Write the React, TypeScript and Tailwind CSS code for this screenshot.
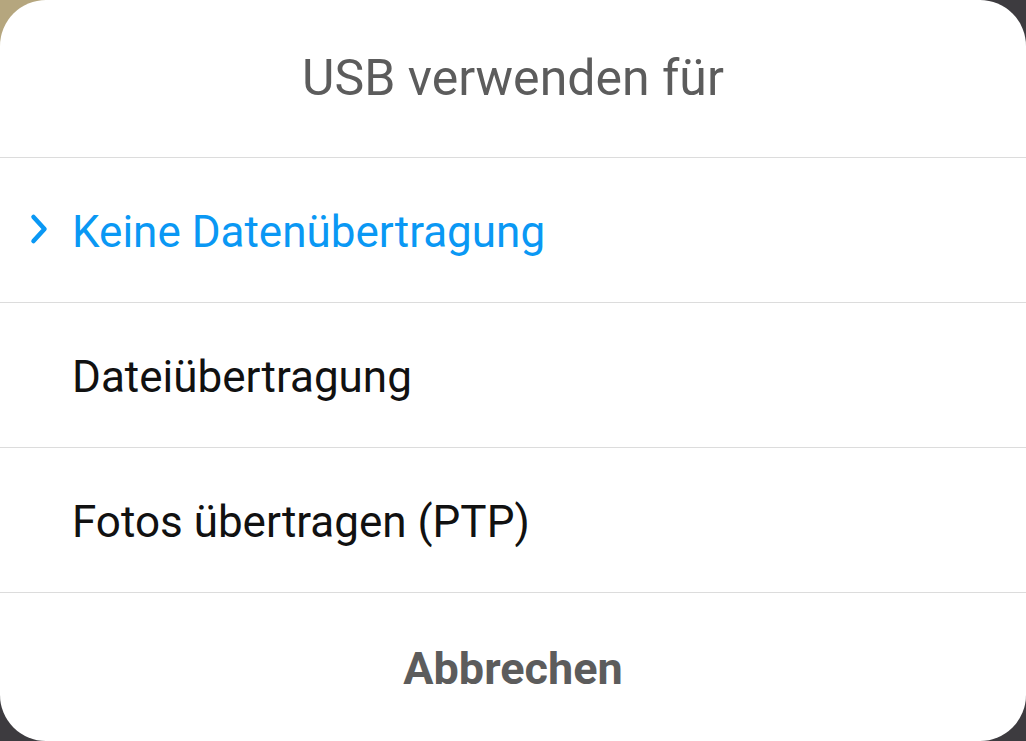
import React from 'react'

const options = [
  { label: 'Keine Datenübertragung', active: true },
  { label: 'Dateiübertragung', active: false },
  { label: 'Fotos übertragen (PTP)', active: false },
]

export default function App() {
  return (
    <div className="w-[1026px] h-[741px] overflow-hidden bg-[radial-gradient(circle_at_top_left,#b5a67e_70px,#3d3b3f_71px)] font-['Roboto',sans-serif]">
      <div className="flex h-full flex-col rounded-[46px] bg-white">
        <div className="flex h-[158px] items-center justify-center border-b border-[#dcdcdc]">
          <h1 className="text-[50px] font-normal text-[#5c5c5c]">USB verwenden für</h1>
        </div>

        {options.map((opt) => (
          <div
            key={opt.label}
            className="relative flex h-[145px] items-center border-b border-[#dcdcdc] pl-[72px] pt-1"
          >
            {opt.active && (
              <svg
                className="absolute left-[29px] top-[55px]"
                width="20"
                height="32"
                viewBox="0 0 20 32"
                fill="none"
              >
                <path
                  d="M4.5 4 L15.5 16 L4.5 28"
                  stroke="#0a98f4"
                  strokeWidth="4.5"
                  strokeLinecap="round"
                  strokeLinejoin="round"
                />
              </svg>
            )}
            <span
              className={`text-[44px] ${opt.active ? 'text-[#0a98f4]' : 'text-[#111111]'}`}
            >
              {opt.label}
            </span>
          </div>
        ))}

        <div className="flex flex-1 items-center justify-center pt-1">
          <button className="text-[45px] font-bold text-[#5c5c5c]">Abbrechen</button>
        </div>
      </div>
    </div>
  )
}
